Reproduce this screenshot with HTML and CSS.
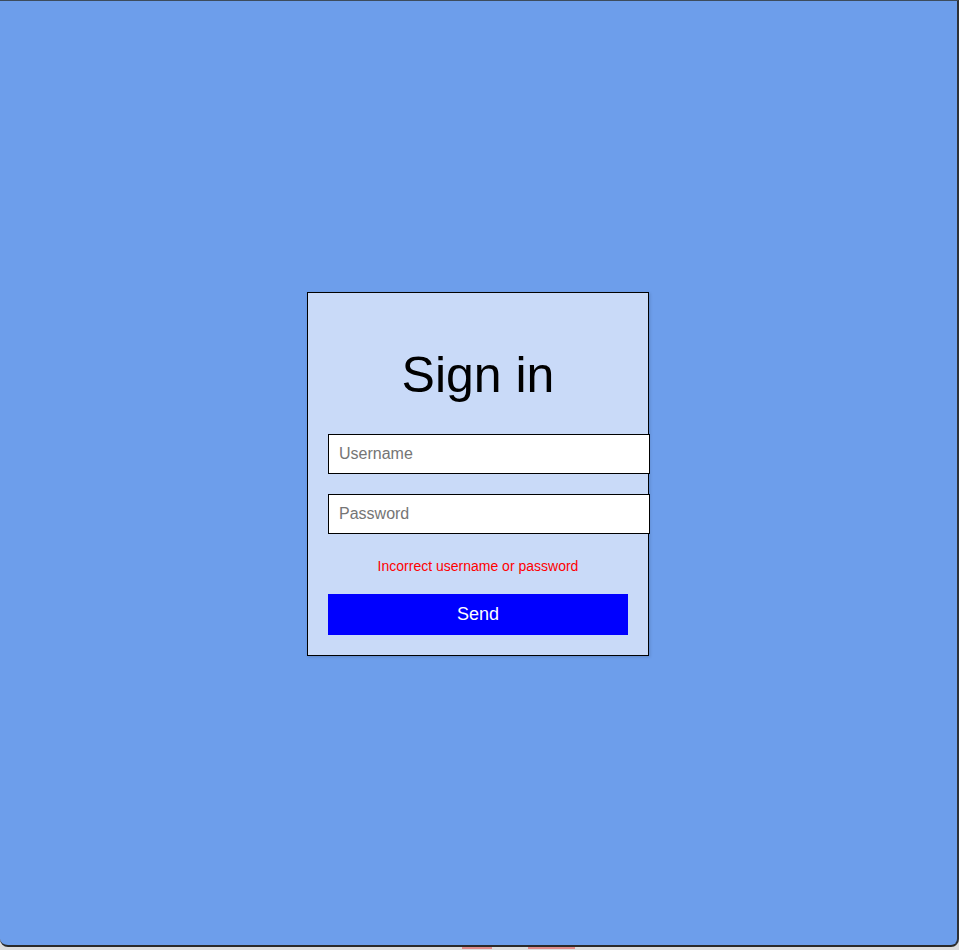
FILE: index.html
```html
<!DOCTYPE html>
<html lang="en">
<head>
<meta charset="utf-8">
<title>Sign in</title>
<link rel="stylesheet" href="styles.css">
</head>
<body>
<div class="frame">
  <form class="card">
    <h1 class="title">Sign in</h1>
    <input class="field" type="text" placeholder="Username">
    <input class="field" type="password" placeholder="Password">
    <p class="error">Incorrect username or password</p>
    <button class="send" type="button">Send</button>
  </form>
</div>
<div class="strip">
  <span class="mark mark-a"></span>
  <span class="mark mark-b"></span>
</div>
</body>
</html>
```
FILE: styles.css
```css
html, body {
  margin: 0;
  padding: 0;
}
body {
  width: 959px;
  height: 950px;
  background: #dedede;
  font-family: "Liberation Sans", Arial, sans-serif;
  overflow: hidden;
}
.frame {
  box-sizing: border-box;
  height: 947px;
  padding: 2px 1px 0 0;
  background: #6d9eeb;
  border-top: 1px solid #3d4c5c;
  border-right: 2px solid #2e3136;
  border-bottom: 2px solid #2a2a2a;
  border-radius: 0 0 8px 8px;
  display: flex;
  align-items: center;
  justify-content: center;
}
.card {
  width: 300px;
  padding: 20px;
  background: #c9daf8;
  border: 1px solid #000;
  display: flex;
  flex-direction: column;
  box-shadow: 1px 1px 3px rgba(0, 0, 0, 0.15);
}
.title {
  margin: 35px 0 31px;
  font-size: 50px;
  font-weight: normal;
  text-align: center;
  color: #000;
  line-height: 55px;
}
.field {
  box-sizing: border-box;
  width: 322px;
  height: 40px;
  padding: 10px;
  margin: 0 0 20px;
  border: 1px solid #000;
  border-radius: 0;
  font-family: "Liberation Sans", Arial, sans-serif;
  font-size: 16px;
  line-height: 18px;
  background: #fff;
  outline: none;
}
.field::placeholder {
  color: #757575;
}
.field + .field {
  margin-bottom: 0;
}
.error {
  margin: 24px 0 20px;
  color: #ff0000;
  font-size: 14px;
  line-height: 16px;
  text-align: center;
}
.send {
  height: 41px;
  border: none;
  background: #0000ff;
  color: #fff;
  font-family: "Liberation Sans", Arial, sans-serif;
  font-size: 18px;
  padding: 0;
  cursor: pointer;
}
.strip {
  height: 3px;
  display: flex;
  padding-left: 462px;
  gap: 36px;
}
.mark {
  display: block;
  height: 2px;
  background: #e08a8a;
}
.mark-a {
  width: 30px;
}
.mark-b {
  width: 47px;
}
```
